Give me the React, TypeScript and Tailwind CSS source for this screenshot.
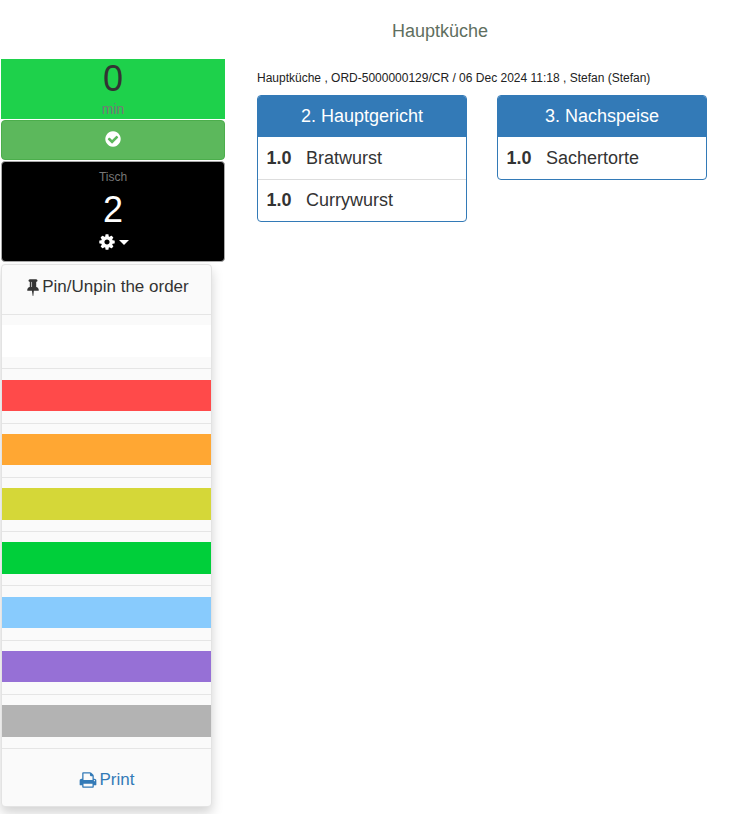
import React from 'react';

const COLORS = ['bg-white', 'bg-[#ff4a4a]', 'bg-[#ffa733]', 'bg-[#d5d738]', 'bg-[#00cf3a]', 'bg-[#88cbfd]', 'bg-[#9670d6]', 'bg-[#b3b3b3]'];

const COURSES = [
  { id: 'main', title: '2. Hauptgericht', items: ['Bratwurst', 'Currywurst'] },
  { id: 'dessert', title: '3. Nachspeise', items: ['Sachertorte'] },
];

// font awesome 4 glyphs, the 5 set in react-icons draws these differently
const ICONS = {
  check: 'M1412 734q0-28-18-46l-91-90q-19-19-45-19t-45 19l-408 407-226-226q-19-19-45-19t-45 19l-91 90q-18 18-18 46 0 27 18 45l362 362q19 19 45 19 27 0 46-19l543-543q18-18 18-45zm252 162q0 209-103 385.5t-279.5 279.5-385.5 103-385.5-103-279.5-279.5-103-385.5 103-385.5 279.5-279.5 385.5-103 385.5 103 279.5 279.5 103 385.5z',
  cog: 'M1152 896q0-106-75-181t-181-75-181 75-75 181 75 181 181 75 181-75 75-181zm512-109v222q0 12-8 23t-20 13l-185 28q-19 54-39 91 35 50 107 138 10 12 10 25t-9 23q-27 37-99 108t-94 71q-12 0-26-9l-138-108q-44 23-91 38-16 136-29 186-7 28-36 28h-222q-14 0-24.5-8.5t-11.5-21.5l-28-184q-49-16-90-37l-141 107q-10 9-25 9-14 0-25-11-126-114-165-168-7-10-7-23 0-12 8-23 15-21 51-66.5t54-70.5q-27-50-41-99l-183-27q-13-2-21-12.5t-8-23.5v-222q0-12 8-23t19-13l186-28q14-46 39-92-40-57-107-138-10-12-10-24 0-10 9-23 26-36 98.5-107.5t94.5-71.5q13 0 26 10l138 107q44-23 91-38 16-136 29-186 7-28 36-28h222q14 0 24.5 8.5t11.5 21.5l28 184q49 16 90 37l142-107q9-9 24-9 13 0 25 10 129 119 165 170 7 8 7 22 0 12-8 23-15 21-51 66.5t-54 70.5q26 50 41 98l183 28q13 2 21 12.5t8 23.5z',
  pin: 'M800 864v-448q0-14-9-23t-23-9-23 9-9 23v448q0 14 9 23t23 9 23-9 9-23zm672 352q0 26-19 45t-45 19h-429l-51 483q-2 12-10.5 20.5t-20.5 8.5h-1q-27 0-32-27l-76-485h-404q-26 0-45-19t-19-45q0-123 78.5-221.5t177.5-98.5v-512q-52 0-90-38t-38-90 38-90 90-38h640q52 0 90 38t38 90-38 90-90 38v512q99 0 177.5 98.5t78.5 221.5z',
  print: 'M448 1536h896v-256h-896v256zm0-640h896v-384h-160q-40 0-68-28t-28-68v-160h-640v640zm1152 64q0-26-19-45t-45-19-45 19-19 45 19 45 45 19 45-19 19-45zm128 0v416q0 13-9.5 22.5t-22.5 9.5h-224v160q0 40-28 68t-68 28h-960q-40 0-68-28t-28-68v-160h-224q-13 0-22.5-9.5t-9.5-22.5v-416q0-79 56.5-135.5t135.5-56.5h64v-544q0-40 28-68t68-28h672q40 0 88 20t76 48l152 152q28 28 48 76t20 88v256h64q79 0 135.5 56.5t56.5 135.5z',
};

const Icon = ({ name, className }: { name: keyof typeof ICONS; className: string }) => (
  <svg viewBox="0 0 1792 1792" fill="currentColor" className={className}>
    <path d={ICONS[name]} />
  </svg>
);

export default function App() {
  return (
    <div className="min-h-[814px] bg-white font-['Liberation_Sans',Arial,sans-serif] text-[#333]">
      <div className="flex h-[59px] items-center justify-center pt-[3px] pl-[124px] text-[18px] text-[#5f6f5f]">Hauptküche</div>
      <div className="flex">
        <div className="ml-px w-[224px] shrink-0">
          <div className="flex h-[60px] flex-col items-center bg-[#1ed14b]">
            <div className="h-[40px] text-[36px] leading-[40px]">0</div>
            <div className="text-[14px] leading-[20px] text-[#777]">min</div>
          </div>
          <div className="mt-px flex h-[40px] items-center justify-center rounded border border-[#4cae4c] bg-[#5cb85c] pb-[2px] text-white">
            <Icon name="check" className="h-[18px] w-[18px]" />
          </div>
          <div className="mt-px flex h-[101px] flex-col items-center rounded border border-[#aaa] bg-black text-white">
            <div className="mt-[7px] text-[12px] leading-[17px] text-[#777]">Tisch</div>
            <div className="mt-[4px] text-[36px] leading-[40px]">2</div>
            <div className="mt-[3px] flex items-center gap-[3px]">
              <Icon name="cog" className="h-[18px] w-[18px]" />
              <span className="h-0 w-0 border-x-[5px] border-t-[5px] border-x-transparent border-t-white" />
            </div>
          </div>
          <div className="mt-[2px] w-[211px] rounded-[4px] border border-[#e3e3e3] bg-[#fafafa] shadow-[0_6px_12px_rgba(0,0,0,0.175)]">
            <div className="flex h-[50px] items-center justify-center border-b border-[#e5e5e5] pb-[5px] text-[17px] text-[#333]">
              <Icon name="pin" className="h-[18px] w-[18px]" />
              <span>Pin/Unpin the order</span>
            </div>
            {COLORS.map((color) => (
              <div key={color} className="flex h-[54.25px] items-center border-b border-[#e5e5e5] pb-px">
                <div className={`h-[31.5px] w-full ${color}`} />
              </div>
            ))}
            <div className="flex h-[57px] items-center justify-center gap-[3px] pt-[5px] text-[17px] text-[#337ab7]">
              <Icon name="print" className="h-[18px] w-[18px]" />
              <span>Print</span>
            </div>
          </div>
        </div>
        <div className="ml-[32px] flex-1">
          <div className="mt-[11px] text-[12px] leading-[17px] text-[#222]">Hauptküche , ORD-5000000129/CR / 06 Dec 2024 11:18 , Stefan (Stefan)</div>
          <div className="mt-[8px] flex items-start gap-[30px]">
            {COURSES.map((course) => (
              <div key={course.id} className="w-[210px] overflow-hidden rounded border border-[#337ab7] bg-white">
                <div className="flex h-[41px] items-center justify-center bg-[#337ab7] text-[18px] text-white">{course.title}</div>
                {course.items.map((item, i) => (
                  <div key={item} className={`flex h-[42px] items-center pl-[8.5px] text-[18px] ${i > 0 ? 'border-t border-[#ddd]' : ''}`}>
                    <b className="w-[39.5px]">1.0</b>
                    <span>{item}</span>
                  </div>
                ))}
              </div>
            ))}
          </div>
        </div>
      </div>
    </div>
  );
}
